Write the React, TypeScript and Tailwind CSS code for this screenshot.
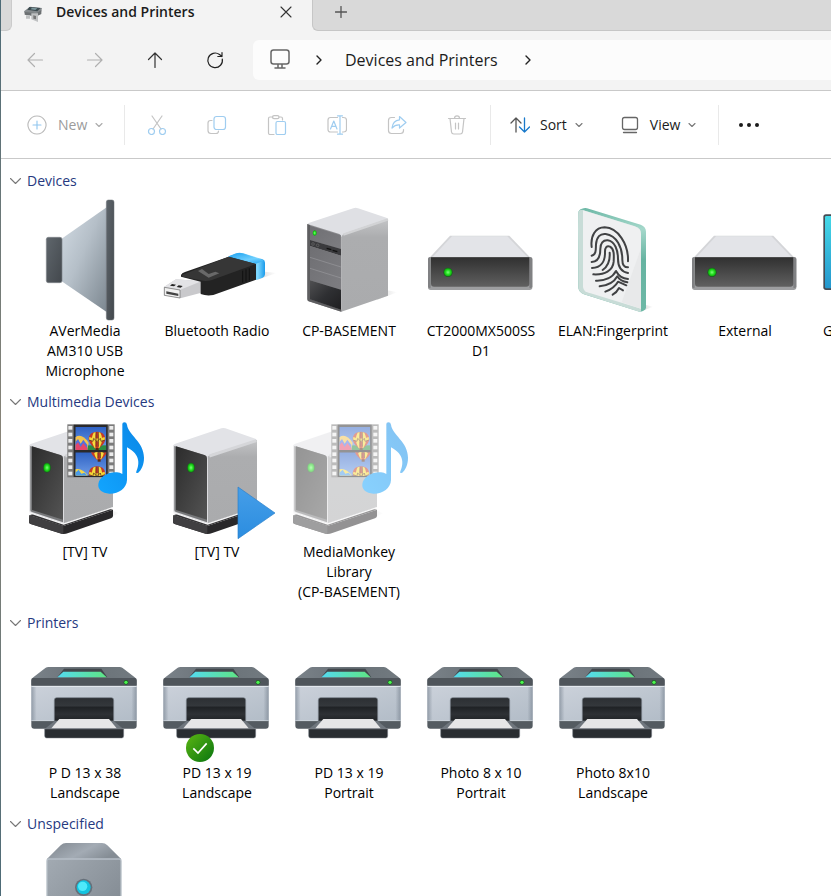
import type { ReactNode } from "react";

function GradientDefs() {
  return (
    <svg className="absolute size-0" aria-hidden="true">
      <defs>
        <linearGradient id="cone" x1="0" y1="0" x2="1" y2="1">
          <stop offset="0" stopColor="#d3dce4" />
          <stop offset="0.45" stopColor="#b5bfc8" />
          <stop offset="1" stopColor="#7c8790" />
        </linearGradient>
        <linearGradient id="steel" x1="0" y1="0" x2="1" y2="1">
          <stop offset="0" stopColor="#5f666c" />
          <stop offset="1" stopColor="#43484d" />
        </linearGradient>
        <linearGradient id="black" x1="0" y1="0" x2="0" y2="1">
          <stop offset="0" stopColor="#303030" />
          <stop offset="1" stopColor="#606060" />
        </linearGradient>
        <linearGradient id="panel" x1="0" y1="0" x2="1" y2="1">
          <stop offset="0" stopColor="#2c2c2c" />
          <stop offset="1" stopColor="#545454" />
        </linearGradient>
        <linearGradient id="side" x1="0" y1="0" x2="0" y2="1">
          <stop offset="0" stopColor="#c4c5c7" />
          <stop offset="0.2" stopColor="#acadaf" />
          <stop offset="1" stopColor="#aaabad" />
        </linearGradient>
        <linearGradient id="bay" x1="0" y1="0" x2="1" y2="1">
          <stop offset="0" stopColor="#6f6f73" />
          <stop offset="1" stopColor="#7d7d81" />
        </linearGradient>
        <linearGradient id="bayLow" x1="0" y1="0" x2="1" y2="1">
          <stop offset="0" stopColor="#505052" />
          <stop offset="0.5" stopColor="#2f3033" />
          <stop offset="1" stopColor="#1e1e20" />
        </linearGradient>
        <radialGradient id="led">
          <stop offset="0" stopColor="#7dff7a" />
          <stop offset="0.6" stopColor="#20dd1c" />
          <stop offset="1" stopColor="#10a010" />
        </radialGradient>
        <linearGradient id="blueCap" x1="0" y1="0" x2="1" y2="0">
          <stop offset="0" stopColor="#2fa8ee" />
          <stop offset="0.8" stopColor="#7fd8ff" />
          <stop offset="1" stopColor="#1a9bea" />
        </linearGradient>
        <linearGradient id="capTop" x1="0" y1="0" x2="0.6" y2="1">
          <stop offset="0" stopColor="#1fa2f0" />
          <stop offset="0.7" stopColor="#6fd0ff" />
          <stop offset="1" stopColor="#3fb6f6" />
        </linearGradient>
        <linearGradient id="glass" x1="0" y1="0" x2="0" y2="1">
          <stop offset="0" stopColor="#6db8a6" />
          <stop offset="0.2" stopColor="#a5d8cb" />
          <stop offset="0.5" stopColor="#66b3a1" />
          <stop offset="1" stopColor="#6db8a6" />
        </linearGradient>
        <linearGradient id="screen" x1="0" y1="0" x2="0" y2="1">
          <stop offset="0" stopColor="#45d9e8" />
          <stop offset="1" stopColor="#2496cd" />
        </linearGradient>
        <linearGradient id="note" x1="0" y1="1" x2="1" y2="0">
          <stop offset="0" stopColor="#12a5ff" />
          <stop offset="1" stopColor="#0a86e6" />
        </linearGradient>
        <linearGradient id="sky" x1="0" y1="0" x2="0" y2="1">
          <stop offset="0" stopColor="#2f62c4" />
          <stop offset="1" stopColor="#6c9be6" />
        </linearGradient>
        <linearGradient id="play" x1="0" y1="0" x2="0" y2="1">
          <stop offset="0" stopColor="#469ee8" />
          <stop offset="1" stopColor="#2b8de0" />
        </linearGradient>
        <linearGradient id="shell" x1="0" y1="0" x2="1" y2="1">
          <stop offset="0" stopColor="#cbd1da" />
          <stop offset="1" stopColor="#b2bcc7" />
        </linearGradient>
        <linearGradient id="edge" x1="0" y1="0" x2="1" y2="0">
          <stop offset="0" stopColor="#7c8794" stopOpacity="0.7" />
          <stop offset="0.05" stopColor="#7c8794" stopOpacity="0" />
          <stop offset="0.95" stopColor="#7c8794" stopOpacity="0" />
          <stop offset="1" stopColor="#7c8794" stopOpacity="0.7" />
        </linearGradient>
        <linearGradient id="lid" x1="0" y1="0" x2="1" y2="0">
          <stop offset="0" stopColor="#54daf0" />
          <stop offset="1" stopColor="#5ee483" />
        </linearGradient>
        <linearGradient id="lidTop" x1="0" y1="0" x2="1" y2="0">
          <stop offset="0" stopColor="#7a8289" />
          <stop offset="0.5" stopColor="#697177" />
          <stop offset="1" stopColor="#727a80" />
        </linearGradient>
        <linearGradient id="slot" x1="0" y1="0" x2="0" y2="1">
          <stop offset="0" stopColor="#2c2f33" />
          <stop offset="0.35" stopColor="#34383c" />
          <stop offset="0.4" stopColor="#1f2225" />
          <stop offset="0.7" stopColor="#2e3135" />
          <stop offset="1" stopColor="#1f2225" />
        </linearGradient>
        <linearGradient id="check" x1="0" y1="0" x2="1" y2="1">
          <stop offset="0" stopColor="#5cb612" />
          <stop offset="1" stopColor="#087410" />
        </linearGradient>
        <linearGradient id="cubeTop" x1="0" y1="0" x2="1" y2="0.4">
          <stop offset="0" stopColor="#7e858d" />
          <stop offset="0.6" stopColor="#a3abb4" />
          <stop offset="1" stopColor="#858d95" />
        </linearGradient>
        <linearGradient id="cubeFront" x1="0" y1="0" x2="1" y2="1">
          <stop offset="0" stopColor="#a2aab2" />
          <stop offset="1" stopColor="#7b838b" />
        </linearGradient>
        <linearGradient id="castShadow" x1="0" y1="0" x2="1" y2="0">
          <stop offset="0" stopColor="#999" stopOpacity="0.4" />
          <stop offset="1" stopColor="#999" stopOpacity="0" />
        </linearGradient>
      </defs>
    </svg>
  );
}

function Art({ box, children, faded }: { box: string; children: ReactNode; faded?: boolean }) {
  return (
    <svg
      viewBox={box}
      aria-hidden="true"
      className={faded ? "block h-[130px] w-[132px] overflow-visible opacity-50" : "block h-[130px] w-[132px] overflow-visible"}
    >
      {children}
    </svg>
  );
}

const Microphone = () => (
  <Art box="57 78 396 390">
    <path d="M185 221 L320 127 V441 L185 349Z" fill="url(#cone)" />
    <rect x="139" y="217" width="47" height="136" rx="6" fill="url(#steel)" stroke="#7d8389" strokeWidth="2" />
    <rect x="319" y="105" width="23" height="360" rx="6" fill="url(#steel)" stroke="#6b7177" strokeWidth="1.500" />
  </Art>
);

const UsbStick = () => (
  <Art box="453 78 396 390">
    <path d="M770 345 L830 324 L795 320Z" fill="url(#castShadow)" />
    <path d="M686 274 L708 265 Q718 261 730 265 L788 283 Q795 286 795 293 V328 Q795 335 788 338 L769 345 L690 320Z" fill="url(#blueCap)" />
    <path d="M690 273 L708 266 Q718 262 730 266 L792 287 L768 296Z" fill="url(#capTop)" />
    <path d="M492 366 L528 343 L604 349 V383 L541 400 L492 391Z" fill="#c9c9cc" />
    <path d="M492 366 L528 343 L604 349 L541 374Z" fill="#e3e3e6" />
    <path d="M493 367 L540 375 V399 L493 391Z" fill="#f0f0f0" stroke="#666" strokeWidth="2" />
    <path d="M499 379 L535 386 V393 L499 386Z" fill="#444" />
    <path d="M516 357 l12 2 -6 5 -12 -2Z M536 361 l12 2 -6 5 -12 -2Z" fill="#222" />
    <path d="M543 330 Q545 324 555 321 L686 275 L768 297 V344 L640 390 Q620 394 602 387 V350 L543 335Z" fill="#232323" />
    <path d="M545 330 L686 275 L768 297 L636 345 Q618 350 602 346 L548 335Z" fill="#363636" />
    <path d="M606 312 L594 318 L626 338 L658 325 L646 320 L626 327Z" fill="#696969" />
    <path d="M728 317 V353 M738 313 V350 M748 310 V346" stroke="#111" strokeWidth="3" />
  </Art>
);

const Tower = () => (
  <Art box="9 78 396 390">
    <path d="M290 405 L352 382 L322 376Z" fill="url(#castShadow)" />
    <path d="M82 178 Q83 175 88 173 L220 130 Q227 127 234 130 L319 158 Q324 160 324 166 L185 215Z" fill="#dfe0e4" />
    <path d="M184 216 Q186 208 196 205 L324 161 V392 L184 440Z" fill="url(#side)" />
    <path d="M190 209 L324 163" stroke="#d2d3d5" strokeWidth="7" />
    <path d="M82 177 L178 207 Q184 210 184 217 V440 L86 409 Q82 407 82 402Z" fill="#8d8d90" />
    <path d="M82 177 L90 181 V402 L184 434 V440 L86 409 Q82 407 82 402Z" fill="#5e5e60" />
    <path d="M90 182 L182 211 V252 L90 225Z" fill="url(#bay)" />
    <path d="M90 225 L183 252 V272 L90 243Z" fill="#3a3a3d" />
    <path d="M90 243 L183 272 V374 L90 346Z" fill="url(#bay)" />
    <path d="M90 277 L183 306 M90 310 L183 339" stroke="#a3a3a6" strokeWidth="1.500" />
    <path d="M140 250 l14 4 M158 256 l14 4" stroke="#111" strokeWidth="4" />
    <circle cx="99" cy="237" r="4" fill="none" stroke="#777" strokeWidth="1.500" />
    <circle cx="113" cy="241" r="4" fill="none" stroke="#777" strokeWidth="1.500" />
    <path d="M90 346 L183 374 V434 L90 403Z" fill="url(#bayLow)" />
    <ellipse cx="104" cy="204" rx="6" ry="8" fill="url(#led)" />
  </Art>
);

const Drive = () => (
  <Art box="405 78 396 390">
    <path d="M510 212 H688 L755 282 H445Z" fill="#d4d5d8" />
    <path d="M516 214 H682 L742 276 H458Z" fill="#e3e4e8" />
    <rect x="444" y="276" width="313" height="99" rx="8" fill="#9d9ea0" />
    <path d="M444 282 Q444 276 452 276 V366 Q452 374 444 366Z M757 282 Q757 276 748 276 V366 Q748 374 757 366Z" fill="#808183" />
    <path d="M453 277 H748 V356 Q748 365 739 365 H462 Q453 365 453 356Z" fill="url(#black)" />
    <circle cx="504" cy="322" r="14" fill="#1d5a22" />
    <circle cx="504" cy="322" r="12" fill="url(#led)" />
  </Art>
);

const Fingerprint = () => (
  <Art box="-9 78 396 390">
    <path d="M275 438 L310 425 L288 420Z" fill="url(#castShadow)" />
    <path d="M85 142 Q86 134 96 131 Q106 127 116 131 L272 179 Q288 185 288 200 V428 Q288 434 280 437 Q272 442 262 438 L102 388 Q85 382 85 366Z" fill="url(#glass)" />
    <path d="M85 142 Q86 134 96 134 L254 184 Q273 190 273 206 V438 Q268 441 258 437 L102 388 Q85 382 85 366Z" fill="#c8dcd7" />
    <path d="M99 136 L254 184 Q273 190 273 206 V431 L112 382 Q99 378 99 364Z" fill="#eff0f1" />
    <path d="M273 250 L215 412 L273 431Z" fill="#e8e9ea" />
    <g fill="none" stroke="#414244" strokeWidth="6" strokeLinecap="round" strokeLinejoin="round">
      <path d="M125 246 C121 212 136 187 164 187 C204 188 236 238 234 289" />
      <path d="M125 272 C140 268 137 252 138 238 C140 216 150 205 167 207 C200 212 217 246 217 284 C217 300 222 307 234 307" />
      <path d="M125 291 C146 290 151 272 151 252 C151 234 159 225 173 226 C195 229 204 256 204 282 C204 305 212 320 234 324" />
      <path d="M126 309 C154 308 165 288 165 264 C164 247 171 241 180 245 C193 252 192 270 191 290 C189 317 164 330 130 328" />
      <path d="M179 263 C181 290 172 305 158 315" />
      <path d="M138 347 C165 348 188 337 198 318 C206 333 216 341 234 342" />
      <path d="M149 364 C174 362 192 352 202 334 C209 346 218 350 232 352" />
      <path d="M166 380 C184 373 196 364 204 350 L229 361" />
      <path d="M188 389 C197 384 203 377 207 369 L219 376" />
    </g>
  </Art>
);

const Monitor = () => (
  <Art box="783 78 396 390">
    <rect x="820" y="148" width="320" height="227" rx="8" fill="#464c54" />
    <rect x="825" y="153" width="310" height="217" rx="4" fill="url(#screen)" />
  </Art>
);

function MediaBox() {
  return (
    <>
      <path d="M88 376 L190 408 L339 359 V378 Q339 382 333 385 L205 429 Q192 434 180 430 L92 402 Q87 400 87 396Z" fill="#29282a" />
      <path d="M88 376 L190 408 V432 Q184 432 180 430 L92 402 Q87 400 87 396Z" fill="#403f41" />
      <path d="M88 376 L190 408 L339 359 L300 350 L120 365Z" fill="#333234" />
      <path d="M88 166 Q89 163 94 161 L232 115 Q238 113 244 115 L334 146 Q340 149 339 156 L192 205Z" fill="#e2e3e7" />
      <path d="M190 205 Q191 197 202 193 L339 150 V352 L190 401Z" fill="url(#side)" />
      <path d="M196 198 L337 152" stroke="#d5d6d9" strokeWidth="9" />
      <path d="M88 165 L184 194 Q192 197 192 206 V401 L93 369 Q88 367 88 362Z" fill="#dcdcdf" />
      <path d="M91 168 L183 196 Q189 199 189 206 V397 L96 366 Q91 364 91 360Z" fill="#77787a" />
      <path d="M96 169 L183 196 Q189 199 189 206 V389 L96 360Z" fill="url(#panel)" />
      <path d="M88 368 L191 402 L339 353" fill="none" stroke="#f4f4f5" strokeWidth="4" />
      <ellipse cx="141" cy="233" rx="12" ry="15" fill="#1d5a22" />
      <ellipse cx="141" cy="233" rx="10" ry="13" fill="url(#led)" />
    </>
  );
}

function Balloon({ x, y }: { x: number; y: number }) {
  return (
    <g transform={`translate(${x} ${y})`}>
      <path d="M0 -25 C17 -25 25 -14 25 -2 C24 10 12 20 5 26 H-5 C-12 20 -24 10 -25 -2 C-25 -14 -17 -25 0 -25Z" fill="#c63b25" />
      <path d="M-10 -22 C-20 -5 -14 14 -5 26 C-3 10 -6 -10 -3 -24Z M10 -22 C20 -5 14 14 5 26 C3 10 6 -10 3 -24Z" fill="#f6dc3c" />
      <path d="M-23 -9 Q0 0 23 -9 L24 0 Q0 9 -24 0Z" fill="#f4d533" />
      <path d="M-24 0 L-12 4 L-10 -5 L0 5 L10 -5 L12 4 L24 0 M-3 -24 V20 M4 -24 V20" fill="none" stroke="#4a2424" strokeWidth="2" />
      <rect x="-4" y="24" width="9" height="7" fill="#5a2b12" />
    </g>
  );
}

const holes = [108, 128, 147, 167, 187, 206, 226, 245];

const MediaServer = ({ faded }: { faded?: boolean }) => (
  <Art box="57 66 396 390" faded={faded}>
    <path d="M300 395 L358 370 L338 362Z" fill="url(#castShadow)" />
    <MediaBox />
    <clipPath id="frameA">
      <rect x="226" y="111" width="93" height="69" />
    </clipPath>
    <clipPath id="frameB">
      <rect x="226" y="187" width="93" height="70" />
    </clipPath>
    <rect x="202" y="103" width="142" height="159" fill="#7b7b7b" />
    <rect x="221" y="104" width="102" height="157" fill="#2a2a2c" />
    {holes.map((y) => (
      <g key={y} fill="#ececec">
        <rect x="205" y={y} width="12" height="11" />
        <rect x="328" y={y} width="12" height="11" />
      </g>
    ))}
    <g clipPath="url(#frameA)">
      <rect x="226" y="111" width="93" height="69" fill="url(#sky)" />
      <rect x="226" y="166" width="93" height="14" fill="#2c8c42" />
      <path d="M226 142 Q245 128 266 158 L262 180 H226Z" fill="#f3c24c" />
      <path d="M226 156 l8 -9 8 14 8 -12 12 16 V180 H226Z" fill="#4f72de" />
      <path d="M226 166 l8 -9 8 14 8 -12 12 16 V180 H226Z" fill="#e4466c" />
      <Balloon x={291} y={150} />
    </g>
    <g clipPath="url(#frameB)">
      <rect x="226" y="187" width="93" height="70" fill="url(#sky)" />
      <Balloon x={297} y={184} />
      <path d="M226 238 Q245 232 264 257 H226Z" fill="#f5d746" />
      <path d="M226 248 l10 -9 8 12 10 -3 8 9 H226Z" fill="#4a9be8" />
      <Balloon x={291} y={254} />
    </g>
    <path
      d="M367 102 Q367 97 373 97 Q380 97 381 104 C385 135 432 155 432 203 C432 225 424 240 414 249 L408 248 C418 225 424 195 381 172 V270 C380 295 355 312 328 311 C306 310 293 298 295 282 C298 260 325 245 351 247 Q360 248 367 252Z"
      fill="url(#note)"
    />
  </Art>
);

const MediaPlayer = () => (
  <Art box="453 66 396 390">
    <g transform="translate(432 0)">
      <MediaBox />
    </g>
    <path d="M714 291 L825 369 L714 446Z" fill="url(#play)" stroke="#287fca" strokeWidth="2" />
  </Art>
);

const Printer = () => (
  <Art box="57 69 396 390">
    <path d="M94 212 Q94 206 100 202 L136 174 Q140 171 146 171 H358 Q364 171 368 174 L404 202 Q410 206 410 212 V226 H94Z" fill="url(#lidTop)" />
    <path d="M192 176 H304 L322 202 H172Z" fill="#41474c" />
    <path d="M190 185 H302 L320 202 H172Z" fill="url(#lid)" />
    <path d="M95 206 Q96 204 100 204 H404 Q410 204 410 210 V229 H94V210Z" fill="#4f555b" />
    <circle cx="378" cy="217" r="7" fill="#1c6423" />
    <circle cx="378" cy="217" r="5" fill="#4bf54f" />
    <path d="M94 228 H410 V334 H94Z" fill="url(#shell)" />
    <path d="M94 228 H410 V334 H94Z" fill="url(#edge)" />
    <path d="M94 229 H410" stroke="#e8edf2" strokeWidth="3" />
    <path d="M94 333 H410 V347 Q410 356 401 356 H103 Q94 356 94 347Z" fill="#545b61" />
    <path d="M94 332 H410" stroke="#d5dbe1" strokeWidth="2" />
    <path d="M163 334 V270 Q163 263 170 263 H334 Q341 263 341 270 V334Z" fill="url(#slot)" stroke="#777f87" strokeWidth="2" />
    <path d="M165 332 H340 L371 358 H133Z" fill="#70777e" />
    <path d="M178 327 H327 L350 355 H154Z" fill="#e6e6e7" />
    <path d="M134 357 H371 V378 Q371 384 365 384 H140 Q134 384 134 378Z" fill="#292d31" stroke="#7d838a" strokeWidth="1.500" />
  </Art>
);

const DefaultPrinter = () => (
  <div className="relative">
    <Printer />
    <svg viewBox="0 0 84 84" className="absolute bottom-[1px] left-[35px] size-7" role="img" aria-label="Default printer">
      <circle cx="42" cy="42" r="42" fill="url(#check)" />
      <path d="M22 43 L36 57 L62 28" fill="none" stroke="#fff" strokeWidth="5" />
    </svg>
  </div>
);

const Cube = () => (
  <Art box="57 672 396 390">
    <path d="M140 748 L182 706 Q189 699 198 699 H306 Q315 699 322 706 L364 748Z" fill="url(#cubeTop)" />
    <rect x="141" y="747" width="222" height="240" rx="5" fill="url(#cubeFront)" stroke="#b6bfc7" strokeWidth="4" />
    <circle cx="251" cy="832" r="26" fill="#66707a" />
    <circle cx="251" cy="832" r="21" fill="#14c3df" />
    <circle cx="248" cy="829" r="14" fill="#4fe9fa" />
  </Art>
);

type Device = { name: string; icon: ReactNode; cut?: boolean };

const groups: { title: string; items: Device[] }[] = [
  {
    title: "Devices",
    items: [
      { name: "AVerMedia AM310 USB Microphone", icon: <Microphone /> },
      { name: "Bluetooth Radio", icon: <UsbStick /> },
      { name: "CP-BASEMENT", icon: <Tower /> },
      { name: "CT2000MX500SSD1", icon: <Drive /> },
      { name: "ELAN:Fingerprint", icon: <Fingerprint /> },
      { name: "External", icon: <Drive /> },
      { name: "G", icon: <Monitor />, cut: true },
    ],
  },
  {
    title: "Multimedia Devices",
    items: [
      { name: "[TV] TV", icon: <MediaServer /> },
      { name: "[TV] TV", icon: <MediaPlayer /> },
      { name: "MediaMonkey Library\n(CP-BASEMENT)", icon: <MediaServer faded /> },
    ],
  },
  {
    title: "Printers",
    items: [
      { name: "P D 13 x 38 Landscape", icon: <Printer /> },
      { name: "PD 13 x 19 Landscape", icon: <DefaultPrinter /> },
      { name: "PD 13 x 19 Portrait", icon: <Printer /> },
      { name: "Photo 8 x 10 Portrait", icon: <Printer /> },
      { name: "Photo 8x10 Landscape", icon: <Printer /> },
    ],
  },
  { title: "Unspecified", items: [{ name: "", icon: <Cube /> }] },
];

function Group({ title, items }: { title: string; items: Device[] }) {
  return (
    <section>
      <h2>
        <button className="flex h-5 items-center gap-1.5 pl-[9px] text-sm leading-5 text-[#26397f]">
          <Line size="h-3 w-[11px]" box="0 0 11 12" color="#777" d="M0.500 3.500 L5.500 8.500 L10.500 3.500" />
          {title}
        </button>
      </h2>
      <ul className="flex pl-[18px]">
        {items.map((item, i) => (
          <li key={i} className="w-[132px] shrink-0">
            {item.icon}
            <p
              className={
                item.cut
                  ? "pl-3 text-sm leading-5 text-black"
                  : "px-2 text-center text-sm leading-5 wrap-anywhere whitespace-pre-line text-black"
              }
            >
              {item.name}
            </p>
          </li>
        ))}
      </ul>
    </section>
  );
}

function Line({ size, box, color, d, width = 1.1, children }: { size: string; box: string; color: string; d: string; width?: number; children?: ReactNode }) {
  return (
    <svg viewBox={box} className={size} fill="none" stroke={color} strokeWidth={width} strokeLinecap="round" strokeLinejoin="round" aria-hidden="true">
      <path d={d} />
      {children}
    </svg>
  );
}

const Caret = ({ color }: { color: string }) => <Line size="size-2" box="0 0 8 8" color={color} d="M1 2.500 L4 5.500 L7 2.500" />;

const Crumb = () => <Line size="h-3 w-2" box="0 0 8 12" color="#222" width={1.4} d="M2 2 L6 6 L2 10" />;

const navButtons = [
  { label: "Back", color: "#b0b0b0", d: "M17.500 10 H3 M9.500 3.500 L3 10 L9.500 16.500", off: true },
  { label: "Forward", color: "#b0b0b0", d: "M2.500 10 H17 M10.500 3.500 L17 10 L10.500 16.500", off: true },
  { label: "Up", color: "#333", d: "M10 17.500 V3 M3.500 9.500 L10 3 L16.500 9.500", off: false },
  { label: "Refresh", color: "#222", d: "M17.300 9 A7.300 7.300 0 1 1 14.500 4.500 L17 6.500 M17 2.500 V6.500 H12.800", off: false },
];

const g = "#c4c4c4";
const b = "#9fcdf0";

const editButtons = [
  {
    label: "Cut",
    art: (
      <>
        <path d="M5 1 L14 14 M15 1 L6 14" stroke={g} />
        <circle cx="4.500" cy="16.500" r="3" stroke={b} />
        <circle cx="15.500" cy="16.500" r="3" stroke={b} />
      </>
    ),
  },
  {
    label: "Copy",
    art: (
      <>
        <path d="M5 5.500 H3.500 Q1 5.500 1 8 V15.500 Q1 18.500 4 18.500 H9 Q11.500 18.500 11.500 16" stroke={g} />
        <rect x="7" y="1.500" width="11.500" height="13" rx="2.500" stroke={b} />
      </>
    ),
  },
  {
    label: "Paste",
    art: (
      <>
        <path d="M6 2 H3 Q1.500 2 1.500 3.500 V18 Q1.500 19.500 3 19.500 H7 M12 2 H14 Q15.500 2 15.500 3.500 V5" stroke={g} />
        <rect x="5.500" y="0.700" width="6.500" height="3" rx="1.500" stroke={g} />
        <rect x="9" y="6.500" width="9.500" height="13" rx="1.500" stroke={b} />
      </>
    ),
  },
  {
    label: "Rename",
    art: (
      <>
        <path d="M10.500 2.500 H3.500 Q1 2.500 1 5 V14.500 Q1 17 3.500 17 H10.500 M15.500 2.500 H16.500 Q19.500 2.500 19.500 5 V14.500 Q19.500 17 16.500 17 H15.500" stroke={g} />
        <path d="M13 1 V19 M10.500 0.800 H15.500 M10.500 19.200 H15.500 M3.500 14 L6.800 6 L10 14 M4.800 11.300 H8.900" stroke={b} />
      </>
    ),
  },
  {
    label: "Share",
    art: (
      <>
        <path d="M7.500 2.500 H4.500 Q1.500 2.500 1.500 5.500 V15.500 Q1.500 18.500 4.500 18.500 H13.500 Q16.500 18.500 16.500 15.500 V14.500" stroke={g} />
        <path d="M12.500 1.500 L19 7.500 L12.500 13 V9.800 Q8 9.500 5 13 Q5.800 5.500 12.500 4.800Z" stroke={b} />
      </>
    ),
  },
  {
    label: "Delete",
    art: (
      <path d="M1.500 3.500 H18.500 M3 3.500 L4.500 17 Q4.800 19 6.800 19 H13.200 Q15.200 19 15.500 17 L17 3.500 M7.500 3.500 Q7.500 0.800 10 0.800 Q12.500 0.800 12.500 3.500 M8.500 8 V14 M11.500 8 V14" stroke={g} />
    ),
  },
];

const Divider = () => <span className="h-10 w-px shrink-0 bg-[#e9e9e9]" />;

export default function App() {
  return (
    <div className="flex h-screen overflow-hidden bg-white font-['Open_Sans','Noto_Sans',sans-serif] text-[#1b1b1b]">
      <GradientDefs />
      <div className="w-px shrink-0 bg-linear-to-b from-[#4c6a76] via-[#8a8578] to-[#4c6a76]" />
      <div className="flex min-w-0 flex-1 flex-col">
        <header className="border-b border-[#c9c9c9] bg-[#f3f3f3]">
          <div className="flex h-[31px]">
            <div className="w-[11px] shrink-0 rounded-br-md border-r border-b border-[#cbcbcb] bg-[#d9d9d9]" />
            <div className="flex w-[300px] shrink-0 items-center pr-3 pb-[7px] pl-3">
              <svg viewBox="0 0 54 48" className="mt-1 h-4 w-[18px]" aria-hidden="true">
                <path d="M0 16 L18 2 L54 6 L50 24 L36 30 L4 26Z" fill="#858a8d" />
                <path d="M16 3 L50 6 L40 16 L10 11Z" fill="#3c4b50" />
                <path d="M24 5 L40 7 L34 12 L20 10Z" fill="#7c979c" />
                <path d="M2 18 L38 22 L52 12 V24 L38 31 L2 26Z" fill="#6c7072" />
                <path d="M6 28 H18 V38 H6Z M22 22 H42 V48 L22 40Z" fill="#bfc1c2" />
                <path d="M28 28 L36 30 V40 L28 38Z" fill="#777" />
              </svg>
              <span className="ml-[14px] flex-1 text-sm font-semibold">Devices and Printers</span>
              <button aria-label="Close tab" className="grid size-7 place-items-center">
                <Line size="size-3" box="0 0 12 12" color="#333" d="M1 1 L11 11 M11 1 L1 11" />
              </button>
            </div>
            <div className="flex-1 rounded-bl-md border-b border-l border-[#c6c6c6] bg-[#d9d9d9]">
              <button aria-label="New tab" className="ml-[14px] grid h-6 w-7 place-items-center">
                <Line size="size-3" box="0 0 12 12" color="#555" width={1.3} d="M6 0.500 V11.500 M0.500 6 H11.500" />
              </button>
            </div>
          </div>
          <nav className="flex items-center pt-[9px] pb-2.5 pl-1">
            {navButtons.map((n) => (
              <button key={n.label} aria-label={n.label} disabled={n.off} className="grid h-10 w-15 shrink-0 place-items-center">
                <Line size="size-5" box="0 0 20 20" color={n.color} width={1.2} d={n.d} />
              </button>
            ))}
            <div className="ml-2 flex h-10 flex-1 items-center rounded-l-md bg-[#fcfcfc] pl-4">
              <Line size="size-[22px]" box="0 0 22 22" color="#666" width={1.5} d="M4.500 1 H17.500 Q20 1 20 3.500 V12.500 Q20 15 17.500 15 H4.500 Q2 15 2 12.500 V3.500 Q2 1 4.500 1Z M6 19 H16 M9 15.500 V18.500 M13 15.500 V18.500" />
              <span className="ml-6">
                <Crumb />
              </span>
              <button className="ml-[22px] text-base">Devices and Printers</button>
              <span className="ml-[26px]">
                <Crumb />
              </span>
            </div>
          </nav>
        </header>
        <div role="toolbar" className="flex h-[68px] shrink-0 items-center border-b border-[#c9c9c9] text-sm">
          <button disabled className="flex w-[123px] shrink-0 items-center pl-[26px] text-[#9b9b9b]">
            <Line size="size-5" box="0 0 20 20" color="#b9b9b9" d="M10 1 A9 9 0 1 1 9.990 1Z">
              <path d="M10 6 V14 M6 10 H14" stroke="#8fc6ef" />
            </Line>
            <span className="ml-[11px] mr-2">New</span>
            <Caret color="#aaa" />
          </button>
          <Divider />
          <div className="ml-0.5 mr-[3px] flex">
            {editButtons.map((e) => (
              <button key={e.label} aria-label={e.label} disabled className="grid h-10 w-15 place-items-center">
                <svg viewBox="0 0 20 20" className="size-5" fill="none" strokeWidth="1.200" strokeLinecap="round" strokeLinejoin="round" aria-hidden="true">
                  {e.art}
                </svg>
              </button>
            ))}
          </div>
          <Divider />
          <button className="ml-[19px] flex items-center">
            <Line size="size-5" box="0 0 20 20" color="#555" width={1.3} d="M6 17 V3 M1 8 L6 3 L11 8">
              <path d="M14.500 3 V17 M9.500 12 L14.500 17 L19.500 12" stroke="#1979ca" />
            </Line>
            <span className="ml-[10px] mr-2">Sort</span>
            <Caret color="#777" />
          </button>
          <button className="ml-[37px] flex items-center">
            <Line size="size-5" box="0 0 20 20" color="#666" width={1.3} d="M4.500 2.500 H15.500 Q17.500 2.500 17.500 4.500 V12.500 Q17.500 14.500 15.500 14.500 H4.500 Q2.500 14.500 2.500 12.500 V4.500 Q2.500 2.500 4.500 2.500Z M3.500 17.500 H16.500" />
            <span className="ml-[10px] mr-2">View</span>
            <Caret color="#777" />
          </button>
          <span className="ml-[22px] flex">
            <Divider />
          </span>
          <button aria-label="See more" className="ml-[19px]">
            <svg viewBox="0 0 22 6" className="h-1.5 w-[22px]" fill="#1b1b1b" aria-hidden="true">
              <circle cx="3" cy="3" r="2" />
              <circle cx="11" cy="3" r="2" />
              <circle cx="19" cy="3" r="2" />
            </svg>
          </button>
        </div>
        <main className="flex min-h-0 flex-1 flex-col gap-[11px] overflow-hidden pt-3">
          {groups.map((group) => (
            <Group key={group.title} {...group} />
          ))}
        </main>
      </div>
    </div>
  );
}
